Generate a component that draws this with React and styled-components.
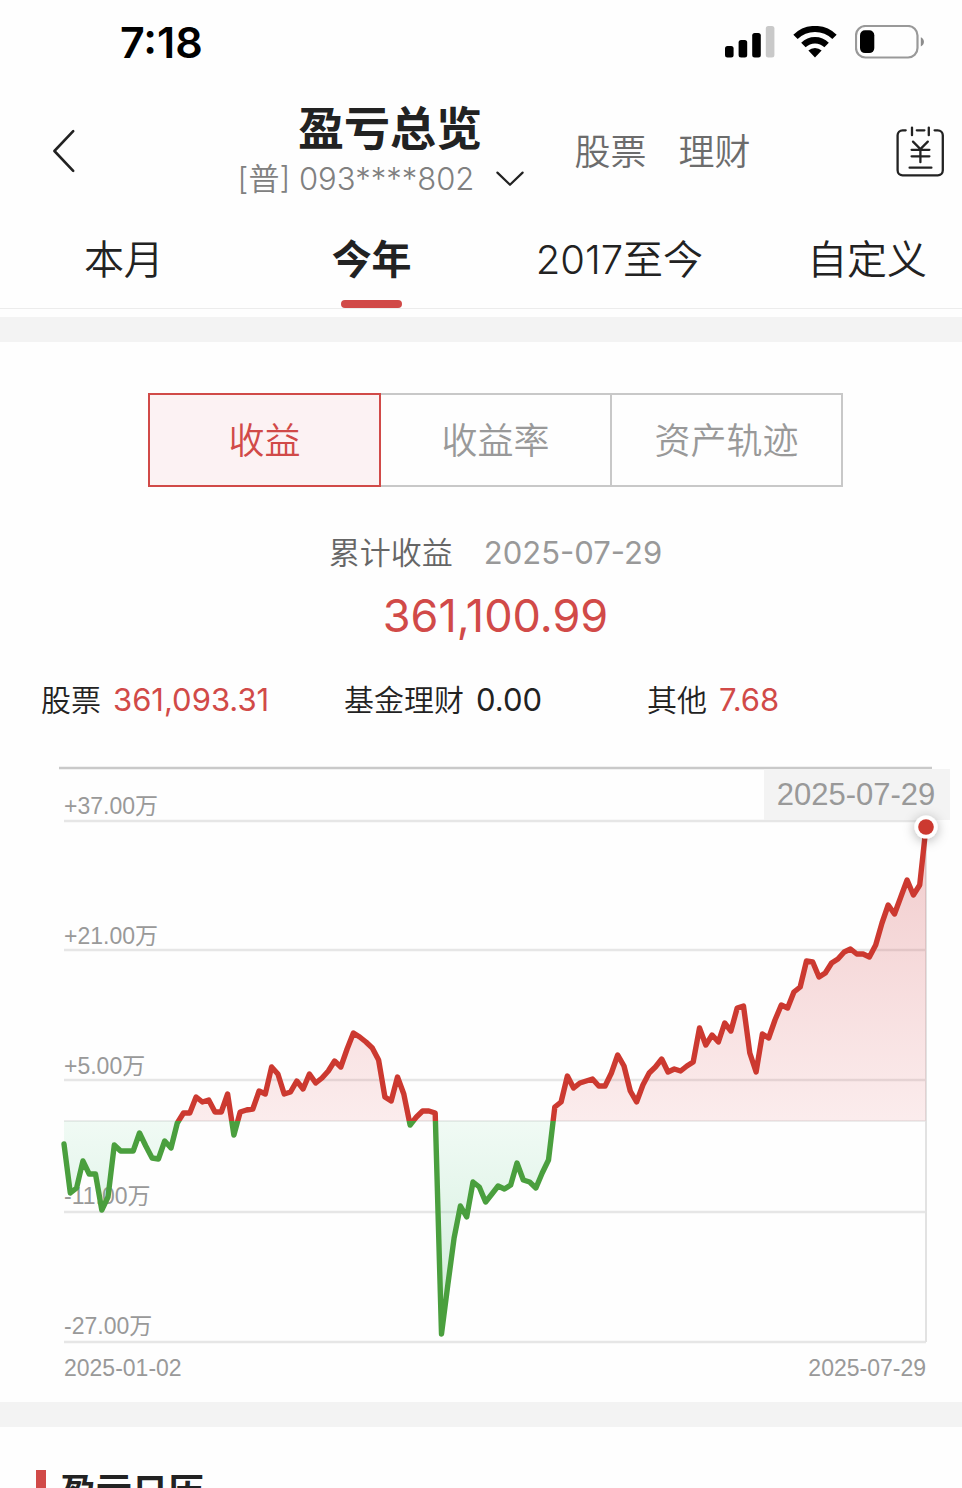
import React, { useState } from 'react';
import styled, { createGlobalStyle } from 'styled-components';

const RED = '#d14a48';
const SANS = 'Inter, "Noto Sans CJK SC", sans-serif';
const CHART_SANS = '"Liberation Sans", "Noto Sans CJK SC", sans-serif';

const GlobalStyle = createGlobalStyle`
  * {
    box-sizing: border-box;
  }

  body {
    margin: 0;
    background: #fefefe;
    color: #222;
    font-family: ${SANS};
  }

  button {
    padding: 0;
    border: 0;
    background: none;
    color: inherit;
    font: inherit;
    cursor: pointer;
  }
`;

const Page = styled.div`
  height: 100vh;
  overflow-x: hidden;
  overflow-y: auto;
  scrollbar-width: none;
`;

const StatusBar = styled.div`
  display: flex;
  align-items: center;
  justify-content: space-between;
  height: 84px;
  padding: 0 37px 0 120px;
`;

const Clock = styled.time`
  color: #000;
  font-size: 43px;
  font-weight: 600;
  line-height: 52px;
`;

const StatusIcons = styled.div`
  display: flex;
  align-items: center;
  gap: 18px;

  svg {
    display: block;
  }
`;

const Header = styled.header`
  display: flex;
  align-items: center;
  justify-content: space-between;
  height: 134px;
  padding: 0 18px 0 52px;

  svg {
    display: block;
  }
`;

const IconButton = styled.button`
  display: flex;
  align-items: center;
  width: ${({ $width }) => $width}px;
  height: 52px;
`;

const HeaderMain = styled.div`
  display: flex;
  align-items: center;
  gap: 32px;
`;

const TitleBlock = styled.div`
  display: flex;
  flex-direction: column;
  align-items: center;
`;

const Title = styled.h1`
  margin: 0;
  font-size: 46px;
  font-weight: 700;
  line-height: 56px;
`;

const AccountButton = styled.button`
  display: flex;
  align-items: center;
  gap: 22px;
  padding-right: 18px;
  color: #808080;
  font-size: 31px;
  font-weight: 350;
  line-height: 46px;
`;

const HeaderLink = styled.a`
  padding-top: 2px;
  color: #6c6c6c;
  font-size: 36px;
  font-weight: 350;
  line-height: 48px;
  text-decoration: none;
`;

/* the content area runs a little past the right edge of the window */
const Wide = styled.div`
  width: calc(100% + 29px);
`;

const Tabs = styled.nav`
  display: grid;
  grid-template-columns: repeat(4, 1fr);
  height: 91px;
  border-bottom: 1px solid #ececec;
`;

const Tab = styled.button`
  display: flex;
  flex-direction: column;
  align-items: center;
  justify-content: space-between;
  padding-top: 12px;
  font-size: 40px;
  font-weight: ${({ $active }) => ($active ? 700 : 350)};
  line-height: 60px;

  &::after {
    content: '';
    width: 61px;
    height: 8px;
    border-radius: 4px;
    background: ${({ $active }) => ($active ? RED : 'transparent')};
  }
`;

const Band = styled.div`
  height: 25px;
  margin-top: ${({ $top }) => $top || 0}px;
  background: #f3f3f3;
`;

const Segments = styled.div`
  display: flex;
  margin: 51px 148px 0;
`;

const Segment = styled.button`
  position: relative;
  z-index: ${({ $active }) => ($active ? 1 : 0)};
  flex: 1;
  height: 94px;
  padding-bottom: 5px;
  border: 2px solid ${({ $active }) => ($active ? RED : '#c8c8c8')};
  background: ${({ $active }) => ($active ? '#fcf2f3' : 'transparent')};
  color: ${({ $active }) => ($active ? RED : '#999')};
  font-size: 36px;
  font-weight: 350;

  & + & {
    margin-left: -2px;
  }
`;

const Summary = styled.div`
  display: flex;
  flex-direction: column;
  align-items: center;
  margin-top: 46px;
`;

const SummaryLabel = styled.div`
  display: flex;
  gap: 31px;
  color: #666;
  font-size: 31px;
  font-weight: 350;
  line-height: 40px;

  time {
    color: #999;
    font-weight: 400;
  }
`;

const Total = styled.strong`
  margin-top: 13px;
  color: ${RED};
  font-size: 45px;
  font-weight: 400;
  line-height: 60px;
`;

const Stats = styled.dl`
  display: grid;
  grid-template-columns: repeat(3, 1fr);
  margin: 34px 41px 0;
  font-size: 31px;
  line-height: 40px;
`;

const Stat = styled.div`
  display: flex;
  gap: 12px;

  dt {
    font-size: 30px;
    font-weight: 350;
  }

  dd {
    margin: 0;
    color: ${({ $red }) => ($red ? RED : 'inherit')};
  }
`;

const Chart = styled.svg`
  display: block;
  width: 100%;
  height: auto;
  margin-top: 40px;
  font-family: ${CHART_SANS};
`;

const AxisLabel = styled.text`
  fill: #999;
  font-size: 23px;
`;

const SectionTitle = styled.h2`
  display: flex;
  gap: 14px;
  margin: 43px 36px 0;
  font-size: 36px;
  font-weight: 700;
  line-height: 44px;

  &::before {
    content: '';
    width: 10px;
    height: 36px;
    background: ${RED};
  }
`;

const PERIODS = ['本月', '今年', '2017至今', '自定义'];
const VIEWS = ['收益', '收益率', '资产轨迹'];

const GRID = [
  { y: 61, label: '+37.00万' },
  { y: 190, label: '+21.00万' },
  { y: 320, label: '+5.00万' },
  { y: 452, label: '-11.00万' },
  { y: 582, label: '-27.00万' }
];

const LEFT = 64;
const RIGHT = 926;
const ZERO = 361;

// one entry per trading day, as a height in the chart
const DAYS = [
  384, 433, 428, 401, 414, 414, 450, 437, 385, 391, 391, 391, 373, 386, 398, 399, 381, 388, 363, 353,
  353, 337, 342, 340, 352, 352, 334, 375, 352, 350, 349, 331, 334, 307, 314, 334, 332, 321, 329, 314,
  323, 318, 311, 301, 307, 289, 273, 277, 282, 288, 300, 337, 341, 317, 334, 365, 357, 351, 351, 353,
  574, 525, 478, 446, 457, 422, 427, 442, 434, 426, 429, 425, 403, 420, 422, 428, 413, 400, 347, 342,
  316, 328, 323, 321, 319, 326, 326, 313, 295, 306, 331, 342, 325, 313, 307, 299, 312, 309, 311, 306,
  302, 268, 285, 275, 282, 263, 271, 248, 246, 293, 312, 274, 278, 260, 245, 248, 232, 227, 201, 202,
  217, 213, 203, 199, 192, 189, 194, 194, 197, 185, 163, 145, 154, 137, 120, 135, 125, 67
];

const STEP = (RIGHT - LEFT) / (DAYS.length - 1);
const LINE = DAYS.map((y, i) => `${(LEFT + i * STEP).toFixed(1)},${y}`).join(' ');
const AREA = `${LEFT},${ZERO} ${LINE} ${RIGHT},${ZERO}`;

const SignalIcon = () => (
  <svg width="50" height="32" viewBox="0 0 50 32" aria-hidden="true">
    <rect x="0" y="20" width="8.6" height="11.6" rx="2.5" />
    <rect x="13.6" y="14" width="8.6" height="17.6" rx="2.5" />
    <rect x="27.2" y="7" width="8.6" height="24.6" rx="2.5" />
    <rect x="40.8" y="0" width="8.6" height="31.6" rx="2.5" fill="#c9c9c9" />
  </svg>
);

const WifiIcon = () => (
  <svg width="44" height="32" viewBox="0 0 44 32" aria-hidden="true">
    <g fill="none" stroke="#000">
      <path d="M2.5 10.9A28 28 0 0 1 41.5 10.9" strokeWidth="6.2" />
      <path d="M10.4 19A16.7 16.7 0 0 1 33.6 19" strokeWidth="6.4" />
    </g>
    <path d="M22 31.4L15.4 24.6A9.5 9.5 0 0 1 28.6 24.6Z" />
  </svg>
);

const BatteryIcon = () => (
  <svg width="70" height="34" viewBox="0 0 70 34" aria-hidden="true">
    <rect x="1" y="1" width="61.5" height="31.5" rx="9.5" fill="none" stroke="#999" strokeWidth="2.2" />
    <rect x="5" y="5.3" width="14.3" height="22.8" rx="5" />
    <path d="M65.8 12.2C70 14 70 19.6 65.8 21.4Z" fill="#8c8c8c" />
  </svg>
);

const BackIcon = () => (
  <svg width="24" height="44" viewBox="0 0 24 44" fill="none" stroke="#222" strokeWidth="2.6" strokeLinecap="round">
    <path d="M21.2 2.2L2.4 22L21.2 41.8" strokeLinejoin="round" />
  </svg>
);

const ChevronIcon = () => (
  <svg width="28" height="16" viewBox="0 0 28 16" fill="none" stroke="#222" strokeWidth="2.2" strokeLinecap="round">
    <path d="M1.4 1.6L14 13.8L26.6 1.6" strokeLinejoin="round" />
  </svg>
);

const BillIcon = () => (
  <svg width="48" height="51" viewBox="0 0 48 51" fill="none" stroke="#222" strokeWidth="2.3" strokeLinecap="round">
    <path d="M9.7 4.3H6.6A5 5 0 0 0 1.6 9.3V44.3A5 5 0 0 0 6.6 49.3H41.8A5 5 0 0 0 46.8 44.3V9.3A5 5 0 0 0 41.8 4.3H38.6" />
    <path d="M16 1.6V9.2M20.8 4.3H28.4M32.8 1.6V9.2" />
    <path d="M17 15.6L24.4 23L31.8 15.6M15.6 23.8H33.4M15.6 30.3H33.4M24.4 23V36.2M13.6 41.7H35.4" />
  </svg>
);

function ProfitChart() {
  return (
    <Chart viewBox="0 0 991 642" role="img" aria-label="累计收益">
      <defs>
        <linearGradient id="gain" gradientUnits="userSpaceOnUse" x1="0" y1="67" x2="0" y2={ZERO}>
          <stop offset="0%" stopColor="#c83a3c" stopOpacity="0.26" />
          <stop offset="100%" stopColor="#dc3a3f" stopOpacity="0.09" />
        </linearGradient>
        <linearGradient id="loss" gradientUnits="userSpaceOnUse" x1="0" y1={ZERO} x2="0" y2="574">
          <stop offset="0%" stopColor="#3cc878" stopOpacity="0.07" />
          <stop offset="100%" stopColor="#3caa5a" stopOpacity="0.24" />
        </linearGradient>
        <clipPath id="above">
          <rect x="0" y="0" width="991" height={ZERO} />
        </clipPath>
        <clipPath id="below">
          <rect x="0" y={ZERO} width="991" height="281" />
        </clipPath>
        <filter id="shadow" x="-100%" y="-100%" width="300%" height="300%">
          <feDropShadow dx="0" dy="2" stdDeviation="6" floodOpacity="0.3" />
        </filter>
      </defs>

      <path d="M59 8H932" stroke="#c9c9c9" strokeWidth="2.4" />
      {GRID.map(({ y }) => (
        <path key={y} d={`M${LEFT} ${y}H${RIGHT}`} stroke="#e6e6e6" strokeWidth="2.4" />
      ))}
      <path d={`M${LEFT} ${ZERO}H${RIGHT}`} stroke="#ececec" strokeWidth="2" />
      <path d={`M${RIGHT} 67V582`} stroke="#e2e2e2" strokeWidth="2" />
      {GRID.map(({ label }, i) => (
        <AxisLabel key={label} x={LEFT} y={54 + i * 130}>{label}</AxisLabel>
      ))}

      <polygon points={AREA} fill="url(#gain)" clipPath="url(#above)" />
      <polygon points={AREA} fill="url(#loss)" clipPath="url(#below)" />
      <g fill="none" strokeWidth="5.4" strokeLinejoin="round" strokeLinecap="round">
        <polyline points={LINE} stroke="#cc3930" clipPath="url(#above)" />
        <polyline points={LINE} stroke="#4a9f3e" clipPath="url(#below)" />
      </g>

      <rect x="764" y="9" width="186" height="51" fill="#f3f3f3" />
      <text x="856" y="45" fontSize="31" fill="#999" textAnchor="middle">2025-07-29</text>
      <circle cx={RIGHT} cy="67" r="11.5" fill="#fff" filter="url(#shadow)" />
      <circle cx={RIGHT} cy="67" r="7.8" fill="#cc3930" />

      <AxisLabel x={LEFT} y="616">2025-01-02</AxisLabel>
      <AxisLabel x={RIGHT} y="616" textAnchor="end">2025-07-29</AxisLabel>
    </Chart>
  );
}

export default function App() {
  const [period, setPeriod] = useState('今年');
  const [view, setView] = useState('收益');

  return (
    <Page>
      <GlobalStyle />
      <StatusBar>
        <Clock>7:18</Clock>
        <StatusIcons>
          <SignalIcon />
          <WifiIcon />
          <BatteryIcon />
        </StatusIcons>
      </StatusBar>

      <Header>
        <IconButton $width={40} aria-label="返回">
          <BackIcon />
        </IconButton>
        <HeaderMain>
          <TitleBlock>
            <Title>盈亏总览</Title>
            <AccountButton>
              [普] 093****802
              <ChevronIcon />
            </AccountButton>
          </TitleBlock>
          <HeaderLink href="#stock">股票</HeaderLink>
          <HeaderLink href="#wealth">理财</HeaderLink>
        </HeaderMain>
        <IconButton $width={48} aria-label="账单">
          <BillIcon />
        </IconButton>
      </Header>

      <Wide>
        <Tabs>
          {PERIODS.map((name) => (
            <Tab key={name} $active={name === period} onClick={() => setPeriod(name)}>{name}</Tab>
          ))}
        </Tabs>
        <Band $top={8} />

        <Segments>
          {VIEWS.map((name) => (
            <Segment key={name} $active={name === view} onClick={() => setView(name)}>{name}</Segment>
          ))}
        </Segments>

        <Summary>
          <SummaryLabel>
            累计收益
            <time>2025-07-29</time>
          </SummaryLabel>
          <Total>361,100.99</Total>
        </Summary>

        <Stats>
          <Stat $red>
            <dt>股票</dt>
            <dd>361,093.31</dd>
          </Stat>
          <Stat>
            <dt>基金理财</dt>
            <dd>0.00</dd>
          </Stat>
          <Stat $red>
            <dt>其他</dt>
            <dd>7.68</dd>
          </Stat>
        </Stats>

        <ProfitChart />
        <Band />
        <SectionTitle>盈亏日历</SectionTitle>
      </Wide>
    </Page>
  );
}
